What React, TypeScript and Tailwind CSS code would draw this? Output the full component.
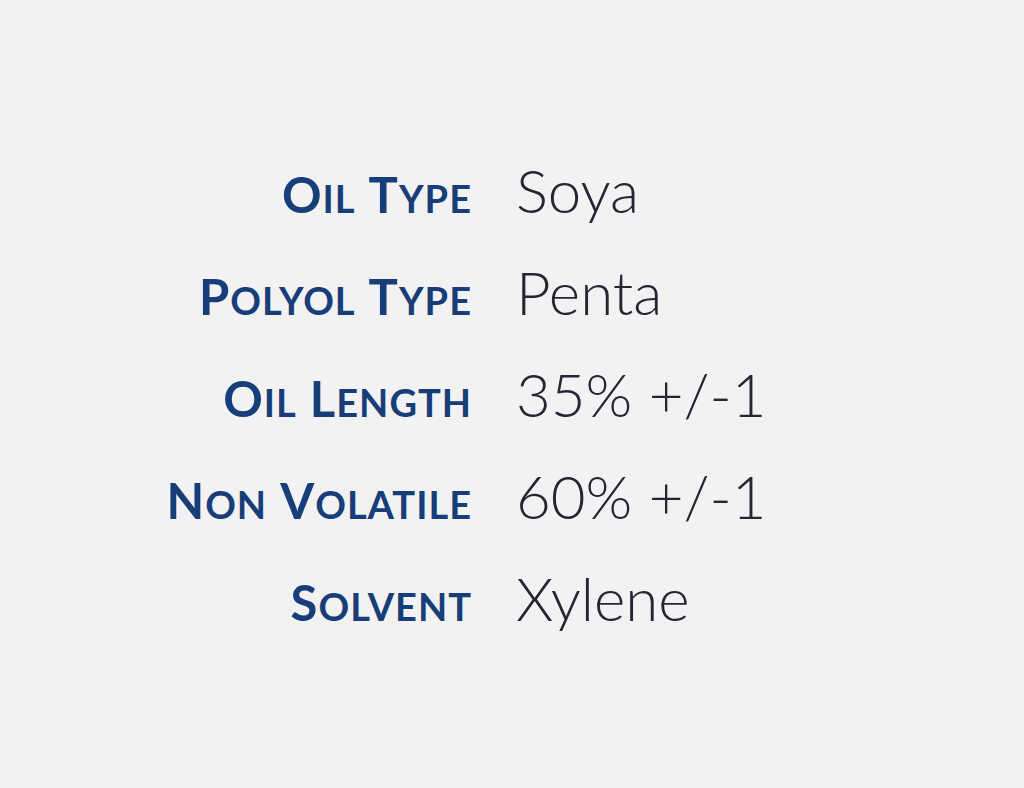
const specs = [
  { label: ['Oil', 'Type'], value: 'Soya' },
  { label: ['Polyol', 'Type'], value: 'Penta' },
  { label: ['Oil', 'Length'], value: '35% +/-1' },
  { label: ['Non', 'Volatile'], value: '60% +/-1' },
  { label: ['Solvent'], value: 'Xylene' },
]

// small caps by hand: first letter big, the rest smaller
function SmallCaps({ words }: { words: string[] }) {
  return (
    <span className="inline-flex items-baseline gap-[13px]">
      {words.map((w) => (
        <span key={w} className="tracking-[1px]">
          <span className="text-[49px]">{w[0].toUpperCase()}</span>
          <span className="text-[38px]">{w.slice(1).toUpperCase()}</span>
        </span>
      ))}
    </span>
  )
}

export default function App() {
  return (
    <main className="flex min-h-[788px] flex-col justify-center bg-[#f2f2f2] font-['Lato','Open_Sans',sans-serif]">
      {specs.map((s) => (
        <div key={s.value} className="flex h-[102px] items-baseline">
          <div className="w-[472px] shrink-0 text-right font-bold leading-[102px] text-[#173e79]">
            <SmallCaps words={s.label} />
          </div>
          <div className="pl-[44px] text-[60px] font-light leading-[102px] text-[#262533]">
            {s.value}
          </div>
        </div>
      ))}
    </main>
  )
}
